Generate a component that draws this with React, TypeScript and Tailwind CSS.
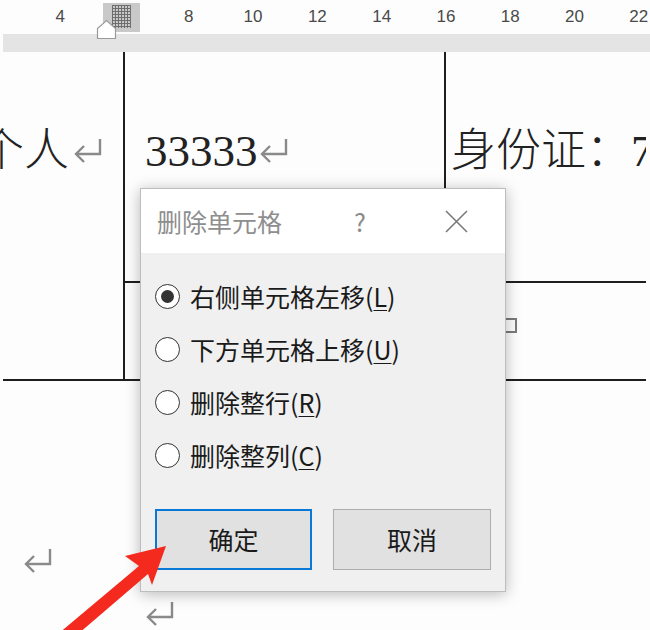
import React from "react";

function ReturnMark({ className = "" }: { className?: string }) {
  return (
    <svg className={className} width="32" height="28" viewBox="0 0 32 28" fill="none">
      <path d="M28 2 V17 H4" stroke="#8a8a8a" strokeWidth="2.4" />
      <path d="M12 9 L4 17 L12 25" stroke="#8a8a8a" strokeWidth="2.4" />
    </svg>
  );
}

function Radio({ checked }: { checked?: boolean }) {
  return (
    <span className="flex h-[25px] w-[25px] shrink-0 items-center justify-center rounded-full border-[1.5px] border-[#333] bg-white">
      {checked && <span className="h-[13px] w-[13px] rounded-full bg-[#333]" />}
    </span>
  );
}

function Option({ checked, label, hot }: { checked?: boolean; label: string; hot: string }) {
  return (
    <div className="flex h-[53px] items-center gap-[10px]">
      <Radio checked={checked} />
      <span className="text-[25px] leading-none text-[#1a1a1a]">
        {label}(<span className="underline decoration-1 underline-offset-[3px]">{hot}</span>)
      </span>
    </div>
  );
}

const nums = ["4", "", "8", "10", "12", "14", "16", "18", "20", "22"];

export default function App() {
  return (
    <div
      className="relative h-[630px] w-[650px] overflow-hidden bg-[#fdfdfd]"
      style={{ fontFamily: '"Noto Sans CJK SC", "Noto Sans", sans-serif' }}
    >
      {/* Ruler */}
      <div className="relative h-[52px]">
        <div
          className="flex h-[34px] items-center pl-[28px] text-[17px] text-[#4a4a4a]"
          style={{ fontFamily: '"Liberation Sans", sans-serif' }}
        >
          {nums.map((n, i) => (
            <span key={i} className="w-[64.3px] shrink-0 text-center">
              {n}
            </span>
          ))}
        </div>
        <div className="ml-[3px] h-[18px] bg-[#e4e4e4]" />
        {/* indent marker box */}
        <div className="absolute left-[103px] top-[3px] flex h-[29px] w-[37px] items-start justify-center bg-[#c9c9c9] pt-[2px]">
          <svg width="19" height="23" viewBox="0 0 19 23">
            {[0, 3, 6, 9, 12, 15, 18, 21].map((y) => (
              <line key={"h" + y} x1="0" y1={y + 0.5} x2="19" y2={y + 0.5} stroke="#6e6e6e" strokeWidth="1" />
            ))}
            {[0, 3, 6, 9, 12, 15, 18].map((x) => (
              <line key={"v" + x} x1={x + 0.5} y1="0" x2={x + 0.5} y2="23" stroke="#6e6e6e" strokeWidth="1" />
            ))}
          </svg>
        </div>
        <svg className="absolute left-[96px] top-[19px]" width="21" height="21" viewBox="0 0 21 21">
          <path d="M1.5 19.5 V9.5 L10.5 1.5 L19.5 9.5 V19.5 Z" fill="#fff" stroke="#9a9a9a" strokeWidth="1.2" />
        </svg>
      </div>

      {/* Table */}
      <div
        className="ml-[3px] grid w-[643px] grid-cols-[122px_321px_200px] grid-rows-[231px_98px] text-[45px] font-light leading-[50px] text-[#222]"
        style={{ fontFamily: '"Liberation Serif", "Noto Sans CJK SC", serif' }}
      >
        <div className="row-span-2 flex items-start justify-end whitespace-nowrap border-b-2 border-r-2 border-[#1e1e1e] pr-[19px] pt-[74px]">
          <span className="flex items-center">
            个人
            <ReturnMark className="ml-[3px]" />
          </span>
        </div>
        <div className="flex items-start whitespace-nowrap border-b-2 border-r-2 border-[#1e1e1e] pl-[20px] pt-[74px]">
          <span className="flex items-center">
            33333
            <ReturnMark />
          </span>
        </div>
        <div className="overflow-hidden whitespace-nowrap border-b-2 border-[#1e1e1e] pl-[5px] pt-[74px]">
          身份证：7
        </div>
        <div className="border-b-2 border-[#1e1e1e]" />
        <div className="border-b-2 border-[#1e1e1e] pl-[56px] pt-[35px]">
          <div className="h-[15px] w-[15px] border-2 border-[#7a7a7a]" />
        </div>
      </div>

      {/* Paragraph marks below table */}
      <div className="flex flex-col pt-[166px]">
        <ReturnMark className="ml-[22px]" />
        <ReturnMark className="ml-[144px] mt-[25px]" />
      </div>

      {/* Dialog */}
      <div className="absolute left-[140px] top-[188px] flex h-[404px] w-[366px] flex-col border border-[#bdbdbd] bg-white shadow-[0_2px_14px_rgba(0,0,0,0.28)]">
        <div className="flex h-[64px] shrink-0 items-center pl-[16px] pr-[24px]">
          <span className="text-[25px] leading-none text-[#8e8e8e]">删除单元格</span>
          <span className="ml-auto w-[40px] text-center text-[25px] leading-none text-[#8a8a8a]">?</span>
          <span className="ml-[51px] flex w-[50px] justify-center">
            <svg width="23" height="23" viewBox="0 0 23 23">
              <path d="M1 1 L22 22 M22 1 L1 22" stroke="#7a7a7a" strokeWidth="1.6" />
            </svg>
          </span>
        </div>
        <div className="flex flex-1 flex-col bg-[#f0f0f0] pl-[14px] pt-[17px]">
          <Option checked label="右侧单元格左移" hot="L" />
          <Option label="下方单元格上移" hot="U" />
          <Option label="删除整行" hot="R" />
          <Option label="删除整列" hot="C" />
          <div className="mt-[27px] flex gap-[21px]">
            <button className="flex h-[61px] w-[157px] items-center justify-center border-2 border-[#0a78d6] bg-[#e1e1e1] text-[25px] text-[#1a1a1a]">
              确定
            </button>
            <button className="flex h-[61px] w-[158px] items-center justify-center border border-[#adadad] bg-[#e1e1e1] text-[25px] text-[#1a1a1a]">
              取消
            </button>
          </div>
        </div>
      </div>

      {/* Red arrow */}
      <svg className="absolute left-0 top-0" width="650" height="630" viewBox="0 0 650 630">
        <polygon
          points="166,546 125,556 139,566 58,634 78,634 148,574 152,585"
          fill="#f52a1e"
        />
      </svg>
    </div>
  );
}
